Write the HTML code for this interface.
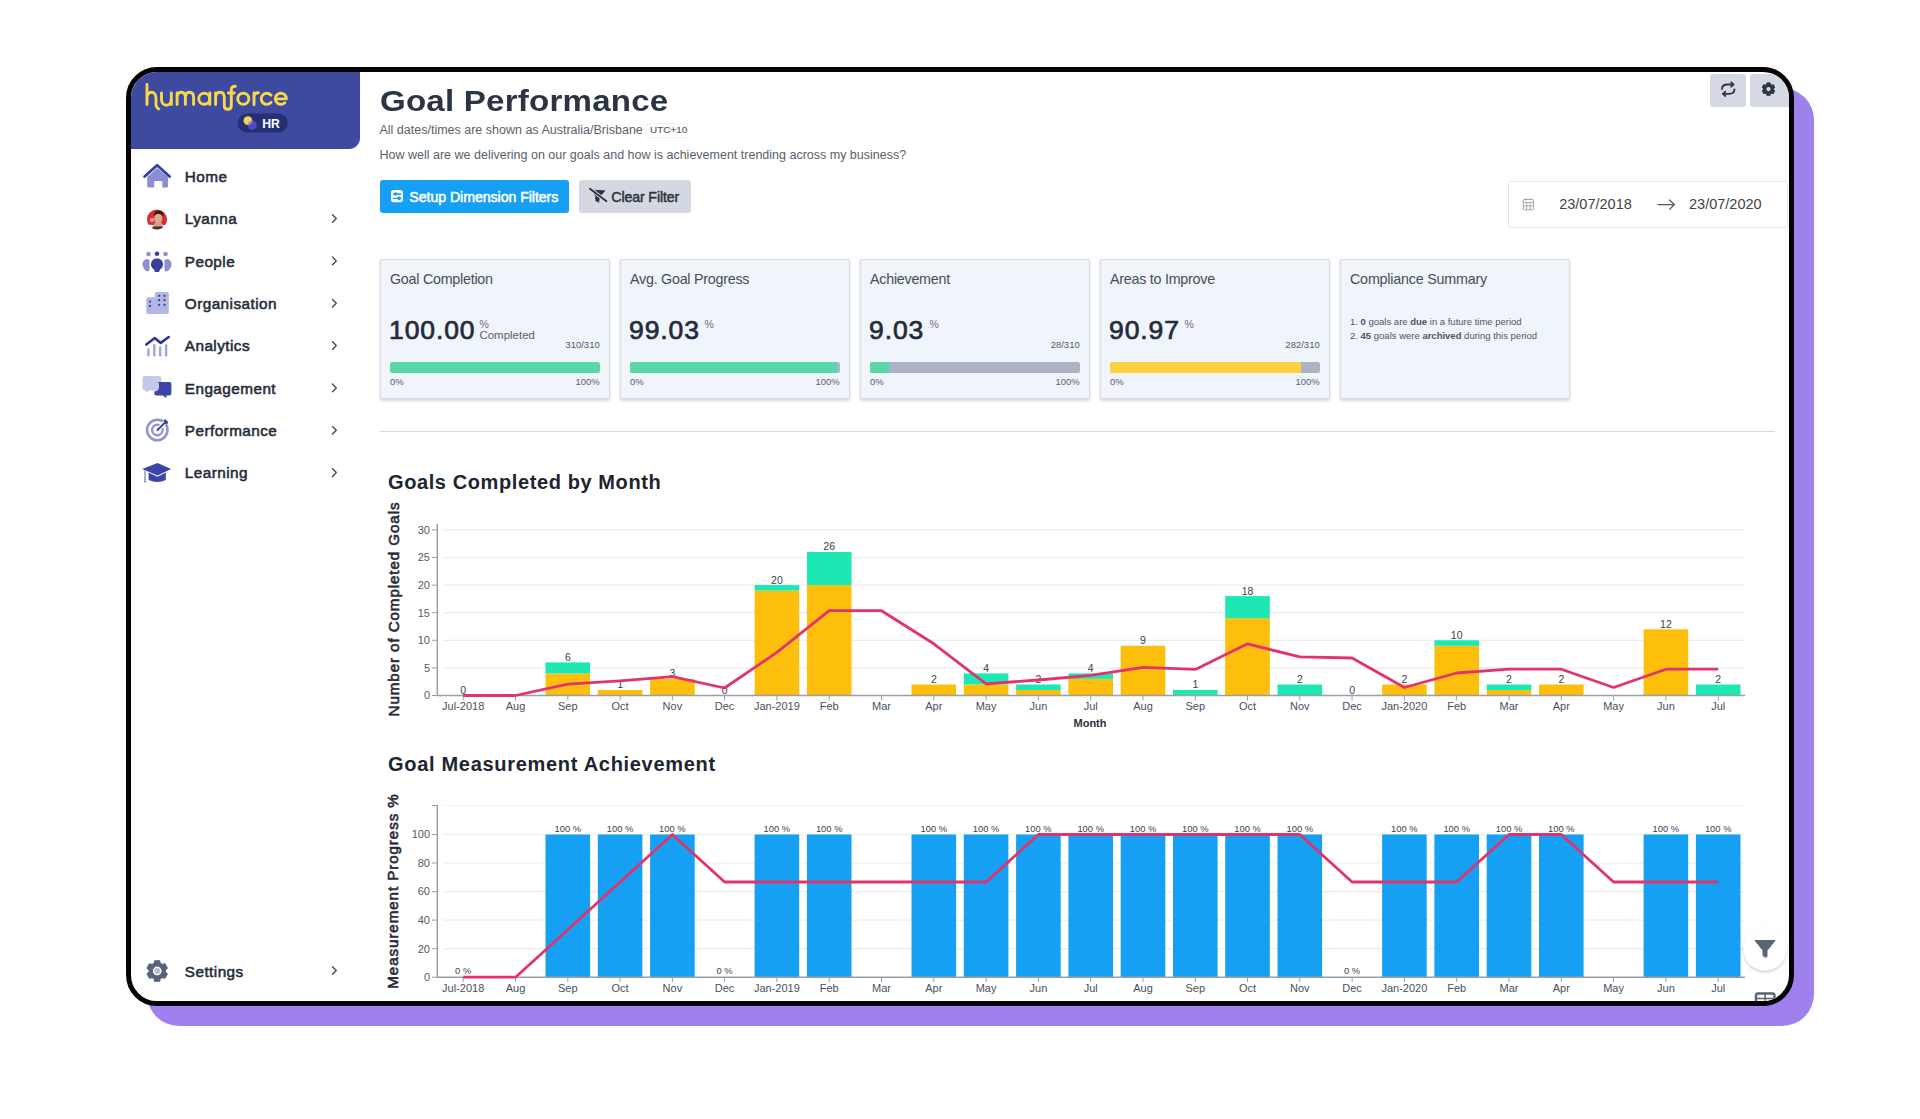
<!DOCTYPE html>
<html><head><meta charset="utf-8">
<style>
*{margin:0;padding:0;box-sizing:border-box}
html,body{width:1920px;height:1119px;overflow:hidden;background:#fff;font-family:"Liberation Sans",sans-serif}
.abs{position:absolute;white-space:nowrap}
#shadow{position:absolute;left:147px;top:88px;width:1667px;height:938px;border-radius:32px;background:#9e81ec}
#frame{position:absolute;left:126px;top:67px;width:1668px;height:939px;border:5px solid #050307;border-radius:31px;overflow:hidden;background:#fff}
#pg{position:absolute;left:-131px;top:-72px;width:1920px;height:1119px}
#sbhead{position:absolute;left:131px;top:72px;width:229px;height:77px;background:#3d4a9f;border-bottom-right-radius:11px}
.card{position:absolute;top:259px;width:229.5px;height:140px;background:#f0f4fb;border:1px solid #d9dce3;border-radius:2px;box-shadow:0 1.5px 3px rgba(0,0,0,0.16)}
</style></head><body>
<div id="shadow"></div>
<div id="frame"><div id="pg">
<div id="sbhead"></div>
<svg width="1920" height="1119" style="position:absolute;left:0;top:0">
<path d="M147.2,177 L157.1,168 L168.1,177 L168.1,186 Q168.1,187.5 166.6,187.5 L162.3,187.5 L162.3,181 L154.2,181 L154.2,187.5 L148.7,187.5 Q147.2,187.5 147.2,186 Z" fill="#8b8fd1"/>
<path d="M144.6,176.5 L157.1,165.2 L169.6,176.5" fill="none" stroke="#3a3f9c" stroke-width="2.8" stroke-linejoin="round" stroke-linecap="round"/>
<clipPath id="av"><circle cx="157" cy="219.5" r="10"/></clipPath>
<g clip-path="url(#av)"><rect x="146" y="209" width="22" height="22" fill="#f2ecea"/><path d="M146,209 L168,209 L168,226 Q164,224 160,225 L153,225 Q149,224 146,226 Z" fill="#d42b35"/><ellipse cx="152" cy="220" rx="2.5" ry="2.2" fill="#e98f8a"/><ellipse cx="158.3" cy="218.5" rx="4" ry="5.2" fill="#d8aa8e"/><path d="M153.8,216 Q154,210.5 159,210.8 Q164,211.2 163.2,216.5 Q161.5,213.5 158.5,213.8 Q155.5,214 153.8,216 Z" fill="#2a1c18"/><path d="M154,223 L162,223 L163,227 L153,227 Z" fill="#caa08a"/><path d="M151,231 Q151.5,226 155,226.5 L161,226.5 Q164.5,226 165,231 Z" fill="#3c3432"/></g>
<circle cx="148.5" cy="254" r="2.3" fill="#8b8fd1"/><circle cx="157" cy="253.8" r="2.3" fill="#3a3f9c"/><circle cx="165.5" cy="254" r="2.3" fill="#8b8fd1"/>
<path d="M147,259 Q142,260 142.5,265 Q143,268 145.5,270.5 L147.5,271.5 Q149.5,271.5 149.5,269.5 L149.5,260 Z" fill="#8b8fd1"/>
<path d="M167,259 Q172,260 171.5,265 Q171,268 168.5,270.5 L166.5,271.5 Q164.5,271.5 164.5,269.5 L164.5,260 Z" fill="#8b8fd1"/>
<path d="M157,258.5 Q151.5,258.5 151,264 Q151,267.5 154,269.5 L155,272 L159,272 L160,269.5 Q163,267.5 163,264 Q162.5,258.5 157,258.5 Z" fill="#3a3f9c"/>
<rect x="146.3" y="297.3" width="10.5" height="16.7" rx="1.8" fill="#b4b6e2"/>
<rect x="154.8" y="292" width="14" height="22" rx="1.8" fill="#b4b6e2"/>
<circle cx="150" cy="301.6" r="1.15" fill="#3d40a0"/>
<circle cx="150" cy="305.9" r="1.15" fill="#3d40a0"/>
<circle cx="159.1" cy="295.8" r="1.15" fill="#3d40a0"/>
<circle cx="164.5" cy="295.8" r="1.15" fill="#3d40a0"/>
<circle cx="159.1" cy="300.2" r="1.15" fill="#3d40a0"/>
<circle cx="164.5" cy="300.2" r="1.15" fill="#3d40a0"/>
<circle cx="159.1" cy="304.8" r="1.15" fill="#3d40a0"/>
<circle cx="164.5" cy="304.8" r="1.15" fill="#3d40a0"/>
<line x1="148.4" y1="349.5" x2="148.4" y2="355.2" stroke="#a0a4d9" stroke-width="2.4" stroke-linecap="round"/>
<line x1="154.3" y1="345.2" x2="154.3" y2="355.2" stroke="#a0a4d9" stroke-width="2.4" stroke-linecap="round"/>
<line x1="160.2" y1="347.4" x2="160.2" y2="355.2" stroke="#a0a4d9" stroke-width="2.4" stroke-linecap="round"/>
<line x1="166.1" y1="345.2" x2="166.1" y2="355.2" stroke="#a0a4d9" stroke-width="2.4" stroke-linecap="round"/>
<polyline points="146.3,344.5 154.8,338 160.7,342.9 168.8,337" fill="none" stroke="#2f358f" stroke-width="2.6" stroke-linecap="round" stroke-linejoin="round"/>
<path d="M144.5,376 L159.3,376 Q161.3,376 161.3,378 L161.3,388.6 Q161.3,390.6 159.3,390.6 L149,390.6 L147,393 L146,390.6 L144.5,390.6 Q142.5,390.6 142.5,388.6 L142.5,378 Q142.5,376 144.5,376 Z" fill="#c6c8e9"/>
<path d="M157,382 L169.4,382 Q171.4,382 171.4,384 L171.4,393.4 Q171.4,395.4 169.4,395.4 L166.5,395.4 L166,398 L163,395.4 L156.3,395.4 Q154.3,395.4 154.3,393.4 L154.3,391.5 Q159,391 159,387 L159,384 Q159,382 157,382 Z" fill="#3d44a8"/>
<circle cx="157.3" cy="430" r="10.2" fill="none" stroke="#9294cf" stroke-width="2.6"/>
<circle cx="157.3" cy="430" r="5.2" fill="none" stroke="#9294cf" stroke-width="2.4"/>
<line x1="157.5" y1="430" x2="165" y2="422.5" stroke="#ffffff" stroke-width="4.5" stroke-linecap="round"/>
<line x1="157.5" y1="430" x2="165" y2="422.5" stroke="#3d44a8" stroke-width="2" stroke-linecap="round"/>
<path d="M163.5,420 L165.5,419.2 L168,421.8 L167.5,424 L165.5,424.5 Z" fill="#3d44a8"/>
<path d="M142.2,469 L157.5,463 L171.2,469 L157.5,475.5 Z" fill="#3d44a8"/>
<path d="M148.6,472.5 L157.5,476.8 L165.8,472.5 L165.8,480 Q157.5,484 148.6,480 Z" fill="#3d44a8"/>
<path d="M145,470.5 L145,480" stroke="#8c90d0" stroke-width="1.4"/><path d="M143.8,482.5 L145,477 L146.3,482.5 Z" fill="#8c90d0"/>
<polyline points="332.5,214.7 336.3,218.5 332.5,222.3" fill="none" stroke="#454a57" stroke-width="1.4" stroke-linecap="round" stroke-linejoin="round"/>
<polyline points="332.5,257.1 336.3,260.9 332.5,264.7" fill="none" stroke="#454a57" stroke-width="1.4" stroke-linecap="round" stroke-linejoin="round"/>
<polyline points="332.5,299.4 336.3,303.2 332.5,307.0" fill="none" stroke="#454a57" stroke-width="1.4" stroke-linecap="round" stroke-linejoin="round"/>
<polyline points="332.5,341.8 336.3,345.6 332.5,349.4" fill="none" stroke="#454a57" stroke-width="1.4" stroke-linecap="round" stroke-linejoin="round"/>
<polyline points="332.5,384.1 336.3,387.9 332.5,391.7" fill="none" stroke="#454a57" stroke-width="1.4" stroke-linecap="round" stroke-linejoin="round"/>
<polyline points="332.5,426.4 336.3,430.2 332.5,434.1" fill="none" stroke="#454a57" stroke-width="1.4" stroke-linecap="round" stroke-linejoin="round"/>
<polyline points="332.5,468.8 336.3,472.6 332.5,476.4" fill="none" stroke="#454a57" stroke-width="1.4" stroke-linecap="round" stroke-linejoin="round"/>
<polyline points="332.5,966.7 336.3,970.5 332.5,974.3" fill="none" stroke="#454a57" stroke-width="1.4" stroke-linecap="round" stroke-linejoin="round"/>
<polygon points="154.31,963.33 154.70,960.80 159.70,960.80 160.09,963.33 162.40,964.66 164.78,963.74 167.28,968.06 165.29,969.66 165.29,972.34 167.28,973.94 164.78,978.26 162.40,977.34 160.09,978.67 159.70,981.20 154.70,981.20 154.31,978.67 152.00,977.34 149.62,978.26 147.12,973.94 149.11,972.34 149.11,969.66 147.12,968.06 149.62,963.74 152.00,964.66" fill="#586379" stroke="#586379" stroke-width="1.2" stroke-linejoin="round"/>
<circle cx="157.2" cy="971" r="4.4" fill="#ffffff"/><circle cx="157.2" cy="971" r="3" fill="#b9bec8"/>
</svg>
<div class="abs" style="left:184.80px;top:169.05px;font-size:15.3px;color:#262b39;line-height:1;-webkit-text-stroke:0.55px #262b39;letter-spacing:0.45px">Home</div>
<div class="abs" style="left:184.80px;top:211.39px;font-size:15.3px;color:#262b39;line-height:1;-webkit-text-stroke:0.55px #262b39;letter-spacing:0.45px">Lyanna</div>
<div class="abs" style="left:184.80px;top:253.73px;font-size:15.3px;color:#262b39;line-height:1;-webkit-text-stroke:0.55px #262b39;letter-spacing:0.45px">People</div>
<div class="abs" style="left:184.80px;top:296.07px;font-size:15.3px;color:#262b39;line-height:1;-webkit-text-stroke:0.55px #262b39;letter-spacing:0.45px">Organisation</div>
<div class="abs" style="left:184.80px;top:338.41px;font-size:15.3px;color:#262b39;line-height:1;-webkit-text-stroke:0.55px #262b39;letter-spacing:0.45px">Analytics</div>
<div class="abs" style="left:184.80px;top:380.75px;font-size:15.3px;color:#262b39;line-height:1;-webkit-text-stroke:0.55px #262b39;letter-spacing:0.45px">Engagement</div>
<div class="abs" style="left:184.80px;top:423.09px;font-size:15.3px;color:#262b39;line-height:1;-webkit-text-stroke:0.55px #262b39;letter-spacing:0.45px">Performance</div>
<div class="abs" style="left:184.80px;top:465.43px;font-size:15.3px;color:#262b39;line-height:1;-webkit-text-stroke:0.55px #262b39;letter-spacing:0.45px">Learning</div>
<div class="abs" style="left:184.80px;top:963.65px;font-size:15.3px;color:#262b39;line-height:1;-webkit-text-stroke:0.55px #262b39;letter-spacing:0.45px">Settings</div>
<div class="abs" style="left:379.50px;top:85.57px;font-size:29.8px;color:#2b3443;font-weight:bold;line-height:1;letter-spacing:0.2px;transform:scaleX(1.11);transform-origin:0 0">Goal Performance</div>
<div class="abs" style="left:379.50px;top:123.92px;font-size:12.5px;color:#5a5f6a;line-height:1;">All dates/times are shown as Australia/Brisbane</div>
<div class="abs" style="left:646px;top:122.5px;width:42px;height:15px;border:1px solid #eef0f3;border-radius:2px"></div>
<div class="abs" style="left:650.00px;top:125.10px;font-size:9.8px;color:#5d626b;line-height:1;letter-spacing:0.1px;-webkit-text-stroke:0.2px #5d626b">UTC+10</div>
<div class="abs" style="left:379.50px;top:148.62px;font-size:12.5px;color:#5a5f6a;line-height:1;">How well are we delivering on our goals and how is achievement trending across my business?</div>
<div class="abs" style="left:379.5px;top:180px;width:189.5px;height:33px;border-radius:3px;background:#16a0f4"></div>
<div class="abs" style="left:409.30px;top:189.78px;font-size:14.2px;color:#ffffff;line-height:1;letter-spacing:-0.07px;-webkit-text-stroke:0.5px #ffffff">Setup Dimension Filters</div>
<div class="abs" style="left:578.5px;top:180px;width:112px;height:33px;border-radius:3px;background:#d4d8e1"></div>
<div class="abs" style="left:611.30px;top:189.78px;font-size:14.2px;color:#2e3440;line-height:1;letter-spacing:-0.13px;-webkit-text-stroke:0.5px #2e3440">Clear Filter</div>
<div class="abs" style="left:1709.5px;top:74px;width:36.5px;height:32.5px;border-radius:3px;background:#d4d9e3"></div>
<div class="abs" style="left:1750px;top:74px;width:40px;height:32.5px;border-radius:3px;background:#d4d9e3"></div>
<div class="abs" style="left:1507.5px;top:180.5px;width:280px;height:47px;border:1px solid #e6e7ea;border-radius:2px;background:#fff"></div>
<div class="abs" style="left:1559.20px;top:196.92px;font-size:14.5px;color:#3f434b;line-height:1;">23/07/2018</div>
<div class="abs" style="left:1689.00px;top:196.92px;font-size:14.5px;color:#3f434b;line-height:1;">23/07/2020</div>
<div class="card" style="left:380px"></div>
<div class="abs" style="left:390.00px;top:271.89px;font-size:14.3px;color:#474d59;line-height:1;letter-spacing:-0.25px">Goal Completion</div>
<span id="big0" class="abs" style="left:389px;top:316.56px;font-size:26.5px;color:#232a39;line-height:1;letter-spacing:0.9px;-webkit-text-stroke:0.7px #232a39">100.00</span>
<div class="abs" style="left:479.40px;top:319.31px;font-size:10.5px;color:#6a6f7a;line-height:1;">%</div>
<div class="abs" style="left:479.40px;top:329.56px;font-size:11.5px;color:#5d626d;line-height:1;">Completed</div>
<div class="abs" style="right:1320.30px;top:340.16px;font-size:9.5px;color:#555a66;line-height:1;">310/310</div>
<div class="abs" style="left:390px;top:362px;width:209.5px;height:11px;border-radius:2.5px;background:#adb3c4;overflow:hidden"><div style="width:100%;height:100%;background:#5ad5a6"></div></div>
<div class="abs" style="left:390.00px;top:376.56px;font-size:9.5px;color:#5d626d;line-height:1;">0%</div>
<div class="abs" style="right:1320.30px;top:376.56px;font-size:9.5px;color:#5d626d;line-height:1;">100%</div>
<div class="card" style="left:620px"></div>
<div class="abs" style="left:630.00px;top:271.89px;font-size:14.3px;color:#474d59;line-height:1;letter-spacing:-0.25px">Avg. Goal Progress</div>
<span id="big1" class="abs" style="left:629px;top:316.56px;font-size:26.5px;color:#232a39;line-height:1;letter-spacing:0.9px;-webkit-text-stroke:0.7px #232a39">99.03</span>
<div class="abs" style="left:704.60px;top:319.31px;font-size:10.5px;color:#6a6f7a;line-height:1;">%</div>
<div class="abs" style="left:630px;top:362px;width:209.5px;height:11px;border-radius:2.5px;background:#adb3c4;overflow:hidden"><div style="width:99%;height:100%;background:#5ad5a6"></div></div>
<div class="abs" style="left:630.00px;top:376.56px;font-size:9.5px;color:#5d626d;line-height:1;">0%</div>
<div class="abs" style="right:1080.30px;top:376.56px;font-size:9.5px;color:#5d626d;line-height:1;">100%</div>
<div class="card" style="left:860px"></div>
<div class="abs" style="left:870.00px;top:271.89px;font-size:14.3px;color:#474d59;line-height:1;letter-spacing:-0.25px">Achievement</div>
<span id="big2" class="abs" style="left:869px;top:316.56px;font-size:26.5px;color:#232a39;line-height:1;letter-spacing:0.9px;-webkit-text-stroke:0.7px #232a39">9.03</span>
<div class="abs" style="left:929.40px;top:319.31px;font-size:10.5px;color:#6a6f7a;line-height:1;">%</div>
<div class="abs" style="right:840.30px;top:340.16px;font-size:9.5px;color:#555a66;line-height:1;">28/310</div>
<div class="abs" style="left:870px;top:362px;width:209.5px;height:11px;border-radius:2.5px;background:#adb3c4;overflow:hidden"><div style="width:9%;height:100%;background:#5ad5a6"></div></div>
<div class="abs" style="left:870.00px;top:376.56px;font-size:9.5px;color:#5d626d;line-height:1;">0%</div>
<div class="abs" style="right:840.30px;top:376.56px;font-size:9.5px;color:#5d626d;line-height:1;">100%</div>
<div class="card" style="left:1100px"></div>
<div class="abs" style="left:1110.00px;top:271.89px;font-size:14.3px;color:#474d59;line-height:1;letter-spacing:-0.25px">Areas to Improve</div>
<span id="big3" class="abs" style="left:1109px;top:316.56px;font-size:26.5px;color:#232a39;line-height:1;letter-spacing:0.9px;-webkit-text-stroke:0.7px #232a39">90.97</span>
<div class="abs" style="left:1184.60px;top:319.31px;font-size:10.5px;color:#6a6f7a;line-height:1;">%</div>
<div class="abs" style="right:600.30px;top:340.16px;font-size:9.5px;color:#555a66;line-height:1;">282/310</div>
<div class="abs" style="left:1110px;top:362px;width:209.5px;height:11px;border-radius:2.5px;background:#adb3c4;overflow:hidden"><div style="width:91%;height:100%;background:#fdd23e"></div></div>
<div class="abs" style="left:1110.00px;top:376.56px;font-size:9.5px;color:#5d626d;line-height:1;">0%</div>
<div class="abs" style="right:600.30px;top:376.56px;font-size:9.5px;color:#5d626d;line-height:1;">100%</div>
<div class="card" style="left:1340px"></div>
<div class="abs" style="left:1350.00px;top:271.89px;font-size:14.3px;color:#474d59;line-height:1;letter-spacing:-0.2px">Compliance Summary</div>
<div class="abs" style="left:1350.00px;top:317.36px;font-size:9.5px;color:#50555f;line-height:1;">1. <b>0</b> goals are <b>due</b> in a future time period</div>
<div class="abs" style="left:1350.00px;top:331.36px;font-size:9.5px;color:#50555f;line-height:1;">2. <b>45</b> goals were <b>archived</b> during this period</div>
<div class="abs" style="left:380px;top:430.5px;width:1395px;height:1.5px;background:#d5d8de"></div>
<div class="abs" style="left:388.00px;top:472.07px;font-size:20px;color:#1e2430;font-weight:bold;line-height:1;letter-spacing:0.6px">Goals Completed by Month</div>
<svg width="1920" height="1119" style="position:absolute;left:0;top:0">
<line x1="432" y1="695.5" x2="437" y2="695.5" stroke="#9aa0ab" stroke-width="1"/>
<text x="430" y="699.3" text-anchor="end" font-size="11" fill="#555b66" font-family="Liberation Sans">0</text>
<line x1="443" y1="667.9" x2="1745" y2="667.9" stroke="#ececec" stroke-width="1.2"/>
<line x1="432" y1="667.9" x2="437" y2="667.9" stroke="#9aa0ab" stroke-width="1"/>
<text x="430" y="671.7" text-anchor="end" font-size="11" fill="#555b66" font-family="Liberation Sans">5</text>
<line x1="443" y1="640.3" x2="1745" y2="640.3" stroke="#ececec" stroke-width="1.2"/>
<line x1="432" y1="640.3" x2="437" y2="640.3" stroke="#9aa0ab" stroke-width="1"/>
<text x="430" y="644.1" text-anchor="end" font-size="11" fill="#555b66" font-family="Liberation Sans">10</text>
<line x1="443" y1="612.7" x2="1745" y2="612.7" stroke="#ececec" stroke-width="1.2"/>
<line x1="432" y1="612.7" x2="437" y2="612.7" stroke="#9aa0ab" stroke-width="1"/>
<text x="430" y="616.5" text-anchor="end" font-size="11" fill="#555b66" font-family="Liberation Sans">15</text>
<line x1="443" y1="585.1" x2="1745" y2="585.1" stroke="#ececec" stroke-width="1.2"/>
<line x1="432" y1="585.1" x2="437" y2="585.1" stroke="#9aa0ab" stroke-width="1"/>
<text x="430" y="588.9" text-anchor="end" font-size="11" fill="#555b66" font-family="Liberation Sans">20</text>
<line x1="443" y1="557.5" x2="1745" y2="557.5" stroke="#ececec" stroke-width="1.2"/>
<line x1="432" y1="557.5" x2="437" y2="557.5" stroke="#9aa0ab" stroke-width="1"/>
<text x="430" y="561.3" text-anchor="end" font-size="11" fill="#555b66" font-family="Liberation Sans">25</text>
<line x1="443" y1="529.9" x2="1745" y2="529.9" stroke="#ececec" stroke-width="1.2"/>
<line x1="432" y1="529.9" x2="437" y2="529.9" stroke="#9aa0ab" stroke-width="1"/>
<text x="430" y="533.7" text-anchor="end" font-size="11" fill="#555b66" font-family="Liberation Sans">30</text>
<text x="463.2" y="693.9" text-anchor="middle" font-size="10.5" fill="#3a3f48" font-family="Liberation Sans">0</text>
<rect x="545.5" y="673.4" width="44.6" height="22.1" fill="#fdbf0b"/>
<rect x="545.5" y="662.4" width="44.6" height="11.0" fill="#1de8b4"/>
<text x="567.8" y="660.8" text-anchor="middle" font-size="10.5" fill="#3a3f48" font-family="Liberation Sans">6</text>
<rect x="597.8" y="690.0" width="44.6" height="5.5" fill="#fdbf0b"/>
<text x="620.1" y="688.4" text-anchor="middle" font-size="10.5" fill="#3a3f48" font-family="Liberation Sans">1</text>
<rect x="650.1" y="678.9" width="44.6" height="16.6" fill="#fdbf0b"/>
<text x="672.4" y="677.3" text-anchor="middle" font-size="10.5" fill="#3a3f48" font-family="Liberation Sans">3</text>
<text x="724.6" y="693.9" text-anchor="middle" font-size="10.5" fill="#3a3f48" font-family="Liberation Sans">0</text>
<rect x="754.6" y="590.6" width="44.6" height="104.9" fill="#fdbf0b"/>
<rect x="754.6" y="585.1" width="44.6" height="5.5" fill="#1de8b4"/>
<text x="776.9" y="583.5" text-anchor="middle" font-size="10.5" fill="#3a3f48" font-family="Liberation Sans">20</text>
<rect x="806.9" y="585.1" width="44.6" height="110.4" fill="#fdbf0b"/>
<rect x="806.9" y="552.0" width="44.6" height="33.1" fill="#1de8b4"/>
<text x="829.2" y="550.4" text-anchor="middle" font-size="10.5" fill="#3a3f48" font-family="Liberation Sans">26</text>
<rect x="911.5" y="684.5" width="44.6" height="11.0" fill="#fdbf0b"/>
<text x="933.8" y="682.9" text-anchor="middle" font-size="10.5" fill="#3a3f48" font-family="Liberation Sans">2</text>
<rect x="963.8" y="684.5" width="44.6" height="11.0" fill="#fdbf0b"/>
<rect x="963.8" y="673.4" width="44.6" height="11.0" fill="#1de8b4"/>
<text x="986.1" y="671.8" text-anchor="middle" font-size="10.5" fill="#3a3f48" font-family="Liberation Sans">4</text>
<rect x="1016.1" y="690.0" width="44.6" height="5.5" fill="#fdbf0b"/>
<rect x="1016.1" y="684.5" width="44.6" height="5.5" fill="#1de8b4"/>
<text x="1038.4" y="682.9" text-anchor="middle" font-size="10.5" fill="#3a3f48" font-family="Liberation Sans">2</text>
<rect x="1068.4" y="678.9" width="44.6" height="16.6" fill="#fdbf0b"/>
<rect x="1068.4" y="673.4" width="44.6" height="5.5" fill="#1de8b4"/>
<text x="1090.7" y="671.8" text-anchor="middle" font-size="10.5" fill="#3a3f48" font-family="Liberation Sans">4</text>
<rect x="1120.7" y="645.8" width="44.6" height="49.7" fill="#fdbf0b"/>
<text x="1143.0" y="644.2" text-anchor="middle" font-size="10.5" fill="#3a3f48" font-family="Liberation Sans">9</text>
<rect x="1173.0" y="690.0" width="44.6" height="5.5" fill="#1de8b4"/>
<text x="1195.3" y="688.4" text-anchor="middle" font-size="10.5" fill="#3a3f48" font-family="Liberation Sans">1</text>
<rect x="1225.2" y="618.2" width="44.6" height="77.3" fill="#fdbf0b"/>
<rect x="1225.2" y="596.1" width="44.6" height="22.1" fill="#1de8b4"/>
<text x="1247.5" y="594.5" text-anchor="middle" font-size="10.5" fill="#3a3f48" font-family="Liberation Sans">18</text>
<rect x="1277.5" y="684.5" width="44.6" height="11.0" fill="#1de8b4"/>
<text x="1299.8" y="682.9" text-anchor="middle" font-size="10.5" fill="#3a3f48" font-family="Liberation Sans">2</text>
<text x="1352.1" y="693.9" text-anchor="middle" font-size="10.5" fill="#3a3f48" font-family="Liberation Sans">0</text>
<rect x="1382.1" y="684.5" width="44.6" height="11.0" fill="#fdbf0b"/>
<text x="1404.4" y="682.9" text-anchor="middle" font-size="10.5" fill="#3a3f48" font-family="Liberation Sans">2</text>
<rect x="1434.4" y="645.8" width="44.6" height="49.7" fill="#fdbf0b"/>
<rect x="1434.4" y="640.3" width="44.6" height="5.5" fill="#1de8b4"/>
<text x="1456.7" y="638.7" text-anchor="middle" font-size="10.5" fill="#3a3f48" font-family="Liberation Sans">10</text>
<rect x="1486.7" y="690.0" width="44.6" height="5.5" fill="#fdbf0b"/>
<rect x="1486.7" y="684.5" width="44.6" height="5.5" fill="#1de8b4"/>
<text x="1509.0" y="682.9" text-anchor="middle" font-size="10.5" fill="#3a3f48" font-family="Liberation Sans">2</text>
<rect x="1539.0" y="684.5" width="44.6" height="11.0" fill="#fdbf0b"/>
<text x="1561.3" y="682.9" text-anchor="middle" font-size="10.5" fill="#3a3f48" font-family="Liberation Sans">2</text>
<rect x="1643.6" y="629.3" width="44.6" height="66.2" fill="#fdbf0b"/>
<text x="1665.9" y="627.7" text-anchor="middle" font-size="10.5" fill="#3a3f48" font-family="Liberation Sans">12</text>
<rect x="1695.9" y="684.5" width="44.6" height="11.0" fill="#1de8b4"/>
<text x="1718.2" y="682.9" text-anchor="middle" font-size="10.5" fill="#3a3f48" font-family="Liberation Sans">2</text>
<line x1="437.3" y1="524" x2="437.3" y2="695.5" stroke="#9aa0ab" stroke-width="1.5"/>
<line x1="437" y1="695.5" x2="1745" y2="695.5" stroke="#9aa0ab" stroke-width="1.5"/>
<line x1="463.2" y1="695.5" x2="463.2" y2="700.5" stroke="#9aa0ab" stroke-width="1"/>
<text x="463.2" y="710.0" text-anchor="middle" font-size="11" fill="#4a505a" font-family="Liberation Sans">Jul-2018</text>
<line x1="515.5" y1="695.5" x2="515.5" y2="700.5" stroke="#9aa0ab" stroke-width="1"/>
<text x="515.5" y="710.0" text-anchor="middle" font-size="11" fill="#4a505a" font-family="Liberation Sans">Aug</text>
<line x1="567.8" y1="695.5" x2="567.8" y2="700.5" stroke="#9aa0ab" stroke-width="1"/>
<text x="567.8" y="710.0" text-anchor="middle" font-size="11" fill="#4a505a" font-family="Liberation Sans">Sep</text>
<line x1="620.1" y1="695.5" x2="620.1" y2="700.5" stroke="#9aa0ab" stroke-width="1"/>
<text x="620.1" y="710.0" text-anchor="middle" font-size="11" fill="#4a505a" font-family="Liberation Sans">Oct</text>
<line x1="672.4" y1="695.5" x2="672.4" y2="700.5" stroke="#9aa0ab" stroke-width="1"/>
<text x="672.4" y="710.0" text-anchor="middle" font-size="11" fill="#4a505a" font-family="Liberation Sans">Nov</text>
<line x1="724.6" y1="695.5" x2="724.6" y2="700.5" stroke="#9aa0ab" stroke-width="1"/>
<text x="724.6" y="710.0" text-anchor="middle" font-size="11" fill="#4a505a" font-family="Liberation Sans">Dec</text>
<line x1="776.9" y1="695.5" x2="776.9" y2="700.5" stroke="#9aa0ab" stroke-width="1"/>
<text x="776.9" y="710.0" text-anchor="middle" font-size="11" fill="#4a505a" font-family="Liberation Sans">Jan-2019</text>
<line x1="829.2" y1="695.5" x2="829.2" y2="700.5" stroke="#9aa0ab" stroke-width="1"/>
<text x="829.2" y="710.0" text-anchor="middle" font-size="11" fill="#4a505a" font-family="Liberation Sans">Feb</text>
<line x1="881.5" y1="695.5" x2="881.5" y2="700.5" stroke="#9aa0ab" stroke-width="1"/>
<text x="881.5" y="710.0" text-anchor="middle" font-size="11" fill="#4a505a" font-family="Liberation Sans">Mar</text>
<line x1="933.8" y1="695.5" x2="933.8" y2="700.5" stroke="#9aa0ab" stroke-width="1"/>
<text x="933.8" y="710.0" text-anchor="middle" font-size="11" fill="#4a505a" font-family="Liberation Sans">Apr</text>
<line x1="986.1" y1="695.5" x2="986.1" y2="700.5" stroke="#9aa0ab" stroke-width="1"/>
<text x="986.1" y="710.0" text-anchor="middle" font-size="11" fill="#4a505a" font-family="Liberation Sans">May</text>
<line x1="1038.4" y1="695.5" x2="1038.4" y2="700.5" stroke="#9aa0ab" stroke-width="1"/>
<text x="1038.4" y="710.0" text-anchor="middle" font-size="11" fill="#4a505a" font-family="Liberation Sans">Jun</text>
<line x1="1090.7" y1="695.5" x2="1090.7" y2="700.5" stroke="#9aa0ab" stroke-width="1"/>
<text x="1090.7" y="710.0" text-anchor="middle" font-size="11" fill="#4a505a" font-family="Liberation Sans">Jul</text>
<line x1="1143.0" y1="695.5" x2="1143.0" y2="700.5" stroke="#9aa0ab" stroke-width="1"/>
<text x="1143.0" y="710.0" text-anchor="middle" font-size="11" fill="#4a505a" font-family="Liberation Sans">Aug</text>
<line x1="1195.3" y1="695.5" x2="1195.3" y2="700.5" stroke="#9aa0ab" stroke-width="1"/>
<text x="1195.3" y="710.0" text-anchor="middle" font-size="11" fill="#4a505a" font-family="Liberation Sans">Sep</text>
<line x1="1247.5" y1="695.5" x2="1247.5" y2="700.5" stroke="#9aa0ab" stroke-width="1"/>
<text x="1247.5" y="710.0" text-anchor="middle" font-size="11" fill="#4a505a" font-family="Liberation Sans">Oct</text>
<line x1="1299.8" y1="695.5" x2="1299.8" y2="700.5" stroke="#9aa0ab" stroke-width="1"/>
<text x="1299.8" y="710.0" text-anchor="middle" font-size="11" fill="#4a505a" font-family="Liberation Sans">Nov</text>
<line x1="1352.1" y1="695.5" x2="1352.1" y2="700.5" stroke="#9aa0ab" stroke-width="1"/>
<text x="1352.1" y="710.0" text-anchor="middle" font-size="11" fill="#4a505a" font-family="Liberation Sans">Dec</text>
<line x1="1404.4" y1="695.5" x2="1404.4" y2="700.5" stroke="#9aa0ab" stroke-width="1"/>
<text x="1404.4" y="710.0" text-anchor="middle" font-size="11" fill="#4a505a" font-family="Liberation Sans">Jan-2020</text>
<line x1="1456.7" y1="695.5" x2="1456.7" y2="700.5" stroke="#9aa0ab" stroke-width="1"/>
<text x="1456.7" y="710.0" text-anchor="middle" font-size="11" fill="#4a505a" font-family="Liberation Sans">Feb</text>
<line x1="1509.0" y1="695.5" x2="1509.0" y2="700.5" stroke="#9aa0ab" stroke-width="1"/>
<text x="1509.0" y="710.0" text-anchor="middle" font-size="11" fill="#4a505a" font-family="Liberation Sans">Mar</text>
<line x1="1561.3" y1="695.5" x2="1561.3" y2="700.5" stroke="#9aa0ab" stroke-width="1"/>
<text x="1561.3" y="710.0" text-anchor="middle" font-size="11" fill="#4a505a" font-family="Liberation Sans">Apr</text>
<line x1="1613.6" y1="695.5" x2="1613.6" y2="700.5" stroke="#9aa0ab" stroke-width="1"/>
<text x="1613.6" y="710.0" text-anchor="middle" font-size="11" fill="#4a505a" font-family="Liberation Sans">May</text>
<line x1="1665.9" y1="695.5" x2="1665.9" y2="700.5" stroke="#9aa0ab" stroke-width="1"/>
<text x="1665.9" y="710.0" text-anchor="middle" font-size="11" fill="#4a505a" font-family="Liberation Sans">Jun</text>
<line x1="1718.2" y1="695.5" x2="1718.2" y2="700.5" stroke="#9aa0ab" stroke-width="1"/>
<text x="1718.2" y="710.0" text-anchor="middle" font-size="11" fill="#4a505a" font-family="Liberation Sans">Jul</text>
<polyline points="463.2,695.5 515.5,695.5 567.8,684.1 620.1,680.8 672.4,676.7 724.6,688.0 776.9,652.4 829.2,610.7 881.5,610.7 933.8,643.8 986.1,683.9 1038.4,680.0 1090.7,675.4 1143.0,667.3 1195.3,669.4 1247.5,643.8 1299.8,656.9 1352.1,658.0 1404.4,687.5 1456.7,673.0 1509.0,669.2 1561.3,669.2 1613.6,687.5 1665.9,669.2 1718.2,669.2" fill="none" stroke="#e2336c" stroke-width="2.8" stroke-linejoin="round"/>
<text x="1090" y="727" text-anchor="middle" font-size="11" font-weight="bold" fill="#2c313b" font-family="Liberation Sans">Month</text>
<text transform="translate(399,609) rotate(-90)" text-anchor="middle" font-size="15.2" fill="#262b36" stroke="#262b36" stroke-width="0.6" font-family="Liberation Sans" letter-spacing="0.9">Number of Completed Goals</text>
</svg>
<div class="abs" style="left:388.00px;top:754.07px;font-size:20px;color:#1e2430;font-weight:bold;line-height:1;letter-spacing:0.7px">Goal Measurement Achievement</div>
<svg width="1920" height="1119" style="position:absolute;left:0;top:0">
<line x1="432" y1="977.2" x2="437" y2="977.2" stroke="#9aa0ab" stroke-width="1"/>
<text x="430" y="981.0" text-anchor="end" font-size="11" fill="#555b66" font-family="Liberation Sans">0</text>
<line x1="443" y1="948.7" x2="1745" y2="948.7" stroke="#ececec" stroke-width="1.2"/>
<line x1="432" y1="948.7" x2="437" y2="948.7" stroke="#9aa0ab" stroke-width="1"/>
<text x="430" y="952.5" text-anchor="end" font-size="11" fill="#555b66" font-family="Liberation Sans">20</text>
<line x1="443" y1="920.1" x2="1745" y2="920.1" stroke="#ececec" stroke-width="1.2"/>
<line x1="432" y1="920.1" x2="437" y2="920.1" stroke="#9aa0ab" stroke-width="1"/>
<text x="430" y="923.9" text-anchor="end" font-size="11" fill="#555b66" font-family="Liberation Sans">40</text>
<line x1="443" y1="891.6" x2="1745" y2="891.6" stroke="#ececec" stroke-width="1.2"/>
<line x1="432" y1="891.6" x2="437" y2="891.6" stroke="#9aa0ab" stroke-width="1"/>
<text x="430" y="895.4" text-anchor="end" font-size="11" fill="#555b66" font-family="Liberation Sans">60</text>
<line x1="443" y1="863.0" x2="1745" y2="863.0" stroke="#ececec" stroke-width="1.2"/>
<line x1="432" y1="863.0" x2="437" y2="863.0" stroke="#9aa0ab" stroke-width="1"/>
<text x="430" y="866.8" text-anchor="end" font-size="11" fill="#555b66" font-family="Liberation Sans">80</text>
<line x1="443" y1="834.5" x2="1745" y2="834.5" stroke="#ececec" stroke-width="1.2"/>
<line x1="432" y1="834.5" x2="437" y2="834.5" stroke="#9aa0ab" stroke-width="1"/>
<text x="430" y="838.3" text-anchor="end" font-size="11" fill="#555b66" font-family="Liberation Sans">100</text>
<line x1="432" y1="805.5" x2="437" y2="805.5" stroke="#9aa0ab" stroke-width="1"/>
<line x1="443" y1="805.5" x2="1745" y2="805.5" stroke="#f3f3f3" stroke-width="1"/>
<text x="463.2" y="974.2" text-anchor="middle" font-size="9.4" fill="#3c424c" font-family="Liberation Sans">0 %</text>
<rect x="545.5" y="834.5" width="44.6" height="142.7" fill="#15a0f4"/>
<text x="567.8" y="831.5" text-anchor="middle" font-size="9.4" fill="#3c424c" font-family="Liberation Sans">100 %</text>
<rect x="597.8" y="834.5" width="44.6" height="142.7" fill="#15a0f4"/>
<text x="620.1" y="831.5" text-anchor="middle" font-size="9.4" fill="#3c424c" font-family="Liberation Sans">100 %</text>
<rect x="650.1" y="834.5" width="44.6" height="142.7" fill="#15a0f4"/>
<text x="672.4" y="831.5" text-anchor="middle" font-size="9.4" fill="#3c424c" font-family="Liberation Sans">100 %</text>
<text x="724.6" y="974.2" text-anchor="middle" font-size="9.4" fill="#3c424c" font-family="Liberation Sans">0 %</text>
<rect x="754.6" y="834.5" width="44.6" height="142.7" fill="#15a0f4"/>
<text x="776.9" y="831.5" text-anchor="middle" font-size="9.4" fill="#3c424c" font-family="Liberation Sans">100 %</text>
<rect x="806.9" y="834.5" width="44.6" height="142.7" fill="#15a0f4"/>
<text x="829.2" y="831.5" text-anchor="middle" font-size="9.4" fill="#3c424c" font-family="Liberation Sans">100 %</text>
<rect x="911.5" y="834.5" width="44.6" height="142.7" fill="#15a0f4"/>
<text x="933.8" y="831.5" text-anchor="middle" font-size="9.4" fill="#3c424c" font-family="Liberation Sans">100 %</text>
<rect x="963.8" y="834.5" width="44.6" height="142.7" fill="#15a0f4"/>
<text x="986.1" y="831.5" text-anchor="middle" font-size="9.4" fill="#3c424c" font-family="Liberation Sans">100 %</text>
<rect x="1016.1" y="834.5" width="44.6" height="142.7" fill="#15a0f4"/>
<text x="1038.4" y="831.5" text-anchor="middle" font-size="9.4" fill="#3c424c" font-family="Liberation Sans">100 %</text>
<rect x="1068.4" y="834.5" width="44.6" height="142.7" fill="#15a0f4"/>
<text x="1090.7" y="831.5" text-anchor="middle" font-size="9.4" fill="#3c424c" font-family="Liberation Sans">100 %</text>
<rect x="1120.7" y="834.5" width="44.6" height="142.7" fill="#15a0f4"/>
<text x="1143.0" y="831.5" text-anchor="middle" font-size="9.4" fill="#3c424c" font-family="Liberation Sans">100 %</text>
<rect x="1173.0" y="834.5" width="44.6" height="142.7" fill="#15a0f4"/>
<text x="1195.3" y="831.5" text-anchor="middle" font-size="9.4" fill="#3c424c" font-family="Liberation Sans">100 %</text>
<rect x="1225.2" y="834.5" width="44.6" height="142.7" fill="#15a0f4"/>
<text x="1247.5" y="831.5" text-anchor="middle" font-size="9.4" fill="#3c424c" font-family="Liberation Sans">100 %</text>
<rect x="1277.5" y="834.5" width="44.6" height="142.7" fill="#15a0f4"/>
<text x="1299.8" y="831.5" text-anchor="middle" font-size="9.4" fill="#3c424c" font-family="Liberation Sans">100 %</text>
<text x="1352.1" y="974.2" text-anchor="middle" font-size="9.4" fill="#3c424c" font-family="Liberation Sans">0 %</text>
<rect x="1382.1" y="834.5" width="44.6" height="142.7" fill="#15a0f4"/>
<text x="1404.4" y="831.5" text-anchor="middle" font-size="9.4" fill="#3c424c" font-family="Liberation Sans">100 %</text>
<rect x="1434.4" y="834.5" width="44.6" height="142.7" fill="#15a0f4"/>
<text x="1456.7" y="831.5" text-anchor="middle" font-size="9.4" fill="#3c424c" font-family="Liberation Sans">100 %</text>
<rect x="1486.7" y="834.5" width="44.6" height="142.7" fill="#15a0f4"/>
<text x="1509.0" y="831.5" text-anchor="middle" font-size="9.4" fill="#3c424c" font-family="Liberation Sans">100 %</text>
<rect x="1539.0" y="834.5" width="44.6" height="142.7" fill="#15a0f4"/>
<text x="1561.3" y="831.5" text-anchor="middle" font-size="9.4" fill="#3c424c" font-family="Liberation Sans">100 %</text>
<rect x="1643.6" y="834.5" width="44.6" height="142.7" fill="#15a0f4"/>
<text x="1665.9" y="831.5" text-anchor="middle" font-size="9.4" fill="#3c424c" font-family="Liberation Sans">100 %</text>
<rect x="1695.9" y="834.5" width="44.6" height="142.7" fill="#15a0f4"/>
<text x="1718.2" y="831.5" text-anchor="middle" font-size="9.4" fill="#3c424c" font-family="Liberation Sans">100 %</text>
<line x1="437.3" y1="805" x2="437.3" y2="977.2" stroke="#9aa0ab" stroke-width="1.5"/>
<line x1="437" y1="977.2" x2="1745" y2="977.2" stroke="#9aa0ab" stroke-width="1.5"/>
<line x1="463.2" y1="977.2" x2="463.2" y2="982.2" stroke="#9aa0ab" stroke-width="1"/>
<text x="463.2" y="991.7" text-anchor="middle" font-size="11" fill="#4a505a" font-family="Liberation Sans">Jul-2018</text>
<line x1="515.5" y1="977.2" x2="515.5" y2="982.2" stroke="#9aa0ab" stroke-width="1"/>
<text x="515.5" y="991.7" text-anchor="middle" font-size="11" fill="#4a505a" font-family="Liberation Sans">Aug</text>
<line x1="567.8" y1="977.2" x2="567.8" y2="982.2" stroke="#9aa0ab" stroke-width="1"/>
<text x="567.8" y="991.7" text-anchor="middle" font-size="11" fill="#4a505a" font-family="Liberation Sans">Sep</text>
<line x1="620.1" y1="977.2" x2="620.1" y2="982.2" stroke="#9aa0ab" stroke-width="1"/>
<text x="620.1" y="991.7" text-anchor="middle" font-size="11" fill="#4a505a" font-family="Liberation Sans">Oct</text>
<line x1="672.4" y1="977.2" x2="672.4" y2="982.2" stroke="#9aa0ab" stroke-width="1"/>
<text x="672.4" y="991.7" text-anchor="middle" font-size="11" fill="#4a505a" font-family="Liberation Sans">Nov</text>
<line x1="724.6" y1="977.2" x2="724.6" y2="982.2" stroke="#9aa0ab" stroke-width="1"/>
<text x="724.6" y="991.7" text-anchor="middle" font-size="11" fill="#4a505a" font-family="Liberation Sans">Dec</text>
<line x1="776.9" y1="977.2" x2="776.9" y2="982.2" stroke="#9aa0ab" stroke-width="1"/>
<text x="776.9" y="991.7" text-anchor="middle" font-size="11" fill="#4a505a" font-family="Liberation Sans">Jan-2019</text>
<line x1="829.2" y1="977.2" x2="829.2" y2="982.2" stroke="#9aa0ab" stroke-width="1"/>
<text x="829.2" y="991.7" text-anchor="middle" font-size="11" fill="#4a505a" font-family="Liberation Sans">Feb</text>
<line x1="881.5" y1="977.2" x2="881.5" y2="982.2" stroke="#9aa0ab" stroke-width="1"/>
<text x="881.5" y="991.7" text-anchor="middle" font-size="11" fill="#4a505a" font-family="Liberation Sans">Mar</text>
<line x1="933.8" y1="977.2" x2="933.8" y2="982.2" stroke="#9aa0ab" stroke-width="1"/>
<text x="933.8" y="991.7" text-anchor="middle" font-size="11" fill="#4a505a" font-family="Liberation Sans">Apr</text>
<line x1="986.1" y1="977.2" x2="986.1" y2="982.2" stroke="#9aa0ab" stroke-width="1"/>
<text x="986.1" y="991.7" text-anchor="middle" font-size="11" fill="#4a505a" font-family="Liberation Sans">May</text>
<line x1="1038.4" y1="977.2" x2="1038.4" y2="982.2" stroke="#9aa0ab" stroke-width="1"/>
<text x="1038.4" y="991.7" text-anchor="middle" font-size="11" fill="#4a505a" font-family="Liberation Sans">Jun</text>
<line x1="1090.7" y1="977.2" x2="1090.7" y2="982.2" stroke="#9aa0ab" stroke-width="1"/>
<text x="1090.7" y="991.7" text-anchor="middle" font-size="11" fill="#4a505a" font-family="Liberation Sans">Jul</text>
<line x1="1143.0" y1="977.2" x2="1143.0" y2="982.2" stroke="#9aa0ab" stroke-width="1"/>
<text x="1143.0" y="991.7" text-anchor="middle" font-size="11" fill="#4a505a" font-family="Liberation Sans">Aug</text>
<line x1="1195.3" y1="977.2" x2="1195.3" y2="982.2" stroke="#9aa0ab" stroke-width="1"/>
<text x="1195.3" y="991.7" text-anchor="middle" font-size="11" fill="#4a505a" font-family="Liberation Sans">Sep</text>
<line x1="1247.5" y1="977.2" x2="1247.5" y2="982.2" stroke="#9aa0ab" stroke-width="1"/>
<text x="1247.5" y="991.7" text-anchor="middle" font-size="11" fill="#4a505a" font-family="Liberation Sans">Oct</text>
<line x1="1299.8" y1="977.2" x2="1299.8" y2="982.2" stroke="#9aa0ab" stroke-width="1"/>
<text x="1299.8" y="991.7" text-anchor="middle" font-size="11" fill="#4a505a" font-family="Liberation Sans">Nov</text>
<line x1="1352.1" y1="977.2" x2="1352.1" y2="982.2" stroke="#9aa0ab" stroke-width="1"/>
<text x="1352.1" y="991.7" text-anchor="middle" font-size="11" fill="#4a505a" font-family="Liberation Sans">Dec</text>
<line x1="1404.4" y1="977.2" x2="1404.4" y2="982.2" stroke="#9aa0ab" stroke-width="1"/>
<text x="1404.4" y="991.7" text-anchor="middle" font-size="11" fill="#4a505a" font-family="Liberation Sans">Jan-2020</text>
<line x1="1456.7" y1="977.2" x2="1456.7" y2="982.2" stroke="#9aa0ab" stroke-width="1"/>
<text x="1456.7" y="991.7" text-anchor="middle" font-size="11" fill="#4a505a" font-family="Liberation Sans">Feb</text>
<line x1="1509.0" y1="977.2" x2="1509.0" y2="982.2" stroke="#9aa0ab" stroke-width="1"/>
<text x="1509.0" y="991.7" text-anchor="middle" font-size="11" fill="#4a505a" font-family="Liberation Sans">Mar</text>
<line x1="1561.3" y1="977.2" x2="1561.3" y2="982.2" stroke="#9aa0ab" stroke-width="1"/>
<text x="1561.3" y="991.7" text-anchor="middle" font-size="11" fill="#4a505a" font-family="Liberation Sans">Apr</text>
<line x1="1613.6" y1="977.2" x2="1613.6" y2="982.2" stroke="#9aa0ab" stroke-width="1"/>
<text x="1613.6" y="991.7" text-anchor="middle" font-size="11" fill="#4a505a" font-family="Liberation Sans">May</text>
<line x1="1665.9" y1="977.2" x2="1665.9" y2="982.2" stroke="#9aa0ab" stroke-width="1"/>
<text x="1665.9" y="991.7" text-anchor="middle" font-size="11" fill="#4a505a" font-family="Liberation Sans">Jun</text>
<line x1="1718.2" y1="977.2" x2="1718.2" y2="982.2" stroke="#9aa0ab" stroke-width="1"/>
<text x="1718.2" y="991.7" text-anchor="middle" font-size="11" fill="#4a505a" font-family="Liberation Sans">Jul</text>
<polyline points="463.2,977.2 515.5,977.2 567.8,929.7 620.1,882.0 672.4,834.5 724.6,882.0 776.9,882.0 829.2,882.0 881.5,882.0 933.8,882.0 986.1,882.0 1038.4,834.5 1090.7,834.5 1143.0,834.5 1195.3,834.5 1247.5,834.5 1299.8,834.5 1352.1,882.0 1404.4,882.0 1456.7,882.0 1509.0,834.5 1561.3,834.5 1613.6,882.0 1665.9,882.0 1718.2,882.0" fill="none" stroke="#e2336c" stroke-width="2.8" stroke-linejoin="round"/>
<text transform="translate(398,891) rotate(-90)" text-anchor="middle" font-size="15.2" fill="#262b36" stroke="#262b36" stroke-width="0.6" font-family="Liberation Sans" letter-spacing="0.9">Measurement Progress %</text>
</svg>
<svg width="1920" height="1119" style="position:absolute;left:0;top:0">
<path d="M147,84.5 L147,104.5 M147,98.5 C147,94.5 149,92.3 151.5,92.3 C154,92.3 156,94.5 156,98.5 L156,105 Q156.3,107.6 158.6,108.9" fill="none" stroke="#f7d84b" stroke-width="2.9" stroke-linecap="round" stroke-linejoin="round"/>
<path d="M161.5,93 L161.5,99.5 C161.5,103 163.5,105.2 166.4,105.2 C169.3,105.2 171.3,103 171.3,99.5 M171.3,93 L171.3,104.5" fill="none" stroke="#f7d84b" stroke-width="2.9" stroke-linecap="round" stroke-linejoin="round"/>
<path d="M177.1,93 L177.1,104.5 M177.1,97.5 C177.1,94 179,92.3 181.3,92.3 C183.6,92.3 185.4,94 185.4,97.5 L185.4,104.5 M185.4,97.5 C185.4,94 187.3,92.3 189.5,92.3 C191.8,92.3 193.6,94 193.6,97.5 L193.6,104.5" fill="none" stroke="#f7d84b" stroke-width="2.9" stroke-linecap="round" stroke-linejoin="round"/>
<circle cx="204.2" cy="98.8" r="5.5" fill="none" stroke="#f7d84b" stroke-width="2.9" stroke-linecap="round" stroke-linejoin="round"/><path d="M209.8,93 L209.8,104.5" fill="none" stroke="#f7d84b" stroke-width="2.9" stroke-linecap="round" stroke-linejoin="round"/>
<path d="M215.6,93 L215.6,104.5 M215.6,97.5 C215.6,94 217.6,92.3 220,92.3 C222.4,92.3 224.3,94 224.3,97.5 L224.3,105.5 C224.3,108 225.8,109.3 227.8,109.3 C229.8,109.3 231.3,108 231.3,105.5 L231.3,89.5 C231.3,87.3 233,86.1 235.4,86.3 M228.4,93 L234.2,93" fill="none" stroke="#f7d84b" stroke-width="2.9" stroke-linecap="round" stroke-linejoin="round"/>
<circle cx="243.3" cy="98.8" r="5.55" fill="none" stroke="#f7d84b" stroke-width="2.9" stroke-linecap="round" stroke-linejoin="round"/>
<path d="M254,93 L254,104.8 M254,97.3 C254,94.3 255.8,92.5 258.3,92.8" fill="none" stroke="#f7d84b" stroke-width="2.9" stroke-linecap="round" stroke-linejoin="round"/>
<path d="M271.05,95.23 A5.55,5.55 0 1,0 271.05,102.37" fill="none" stroke="#f7d84b" stroke-width="2.9" stroke-linecap="round" stroke-linejoin="round"/>
<path d="M275.5,98.9 L286.4,98.9 A5.55,5.55 0 1,0 284.8,102.7" fill="none" stroke="#f7d84b" stroke-width="2.9" stroke-linecap="round" stroke-linejoin="round"/>
<rect x="237.6" y="113.4" width="50.3" height="19.1" rx="9.55" fill="#262f74"/>
<circle cx="247.9" cy="120.6" r="4.4" fill="#f5d64a"/>
<circle cx="252.3" cy="125.3" r="4.5" fill="#4d4cba"/>
<clipPath id="yc"><circle cx="247.9" cy="120.6" r="4.4"/></clipPath><circle cx="252.3" cy="125.3" r="4.5" fill="#a98af0" clip-path="url(#yc)"/>
<text x="262.3" y="127.8" font-size="12.2" font-weight="bold" fill="#ffffff" font-family="Liberation Sans">HR</text>
<rect x="391" y="190.1" width="11.9" height="12.1" rx="2.6" fill="#ffffff"/>
<path d="M393.6,194 L400.9,194 M393.6,198.4 L400.9,198.4" stroke="#1699eb" stroke-width="1.3" stroke-linecap="round"/>
<circle cx="395.4" cy="194" r="1.8" fill="#1699eb"/><circle cx="399.1" cy="198.4" r="1.8" fill="#1699eb"/>
<path d="M592.3,190.2 L604.8,190.8 L599.6,196.8 L598.6,202.3 L595.9,200.8 L595.6,196.5 Z" fill="#2c3240" stroke="#2c3240" stroke-width="0.8" stroke-linejoin="round"/>
<path d="M589.9,188.7 L606.5,201.3" stroke="#d4d8e1" stroke-width="3.6" stroke-linecap="round"/>
<path d="M589.9,188.7 L606.5,201.3" stroke="#2c3240" stroke-width="1.7" stroke-linecap="round"/>
<path d="M1722,89 C1722,85.8 1724.5,84.5 1727.5,84.5 L1732,84.5" fill="none" stroke="#2f3744" stroke-width="1.8" stroke-linecap="round"/>
<path d="M1731.2,82.3 L1733.6,84.5 L1731.2,86.7" fill="none" stroke="#2f3744" stroke-width="1.8" stroke-linecap="round" stroke-linejoin="round"/>
<path d="M1734.5,89.3 C1734.5,92.5 1732,93.8 1729,93.8 L1724.5,93.8" fill="none" stroke="#2f3744" stroke-width="1.8" stroke-linecap="round"/>
<path d="M1725.3,91.6 L1722.9,93.8 L1725.3,96" fill="none" stroke="#2f3744" stroke-width="1.8" stroke-linecap="round" stroke-linejoin="round"/>
<polygon points="1766.68,84.55 1767.13,82.95 1769.87,82.95 1770.32,84.55 1771.53,85.25 1773.14,84.84 1774.51,87.22 1773.35,88.40 1773.35,89.80 1774.51,90.98 1773.14,93.36 1771.53,92.95 1770.32,93.65 1769.87,95.25 1767.13,95.25 1766.68,93.65 1765.47,92.95 1763.86,93.36 1762.49,90.98 1763.65,89.80 1763.65,88.40 1762.49,87.22 1763.86,84.84 1765.47,85.25" fill="#2f3744" stroke="#2f3744" stroke-width="1.2" stroke-linejoin="round"/>
<circle cx="1768.5" cy="89.1" r="2.1" fill="#d4d9e3"/>
<rect x="1523.3" y="199.5" width="10.2" height="10.3" rx="1" fill="none" stroke="#a3a3a3" stroke-width="1"/>
<path d="M1523.3,202.5 L1533.5,202.5 M1526.7,202.5 L1526.7,209.8 M1530.1,202.5 L1530.1,209.8 M1523.3,205.9 L1533.5,205.9 M1525.5,198.2 L1525.5,200.5 M1531.3,198.2 L1531.3,200.5" stroke="#a3a3a3" stroke-width="0.9"/>
<path d="M1658,204.6 L1674.5,204.6 M1669.5,200 L1674.5,204.6 L1669.5,209.2" fill="none" stroke="#505359" stroke-width="1.2" stroke-linecap="round" stroke-linejoin="round"/>
<defs><filter id="fsh" x="-50%" y="-50%" width="200%" height="200%"><feDropShadow dx="0" dy="1.5" stdDeviation="1.5" flood-color="#000" flood-opacity="0.22"/></filter></defs>
<circle cx="1765" cy="949" r="21.5" fill="#ffffff" filter="url(#fsh)"/>
<path d="M1755,940.5 L1775,940.5 L1767,950.5 L1767,956.5 Q1766,957.6 1764.5,956.8 L1763,955.5 L1763,950.5 Z" fill="#5b6475" stroke="#5b6475" stroke-width="1" stroke-linejoin="round"/>
<circle cx="1765" cy="1015" r="21.5" fill="#ffffff" filter="url(#fsh)"/>
<rect x="1756" y="993.5" width="18.5" height="14" rx="2" fill="none" stroke="#5b6475" stroke-width="2.4"/>
<path d="M1765.2,994 L1765.2,1006 M1756,998.5 L1774.5,998.5" stroke="#5b6475" stroke-width="1.6"/>
</svg>
</div></div>
</body></html>
